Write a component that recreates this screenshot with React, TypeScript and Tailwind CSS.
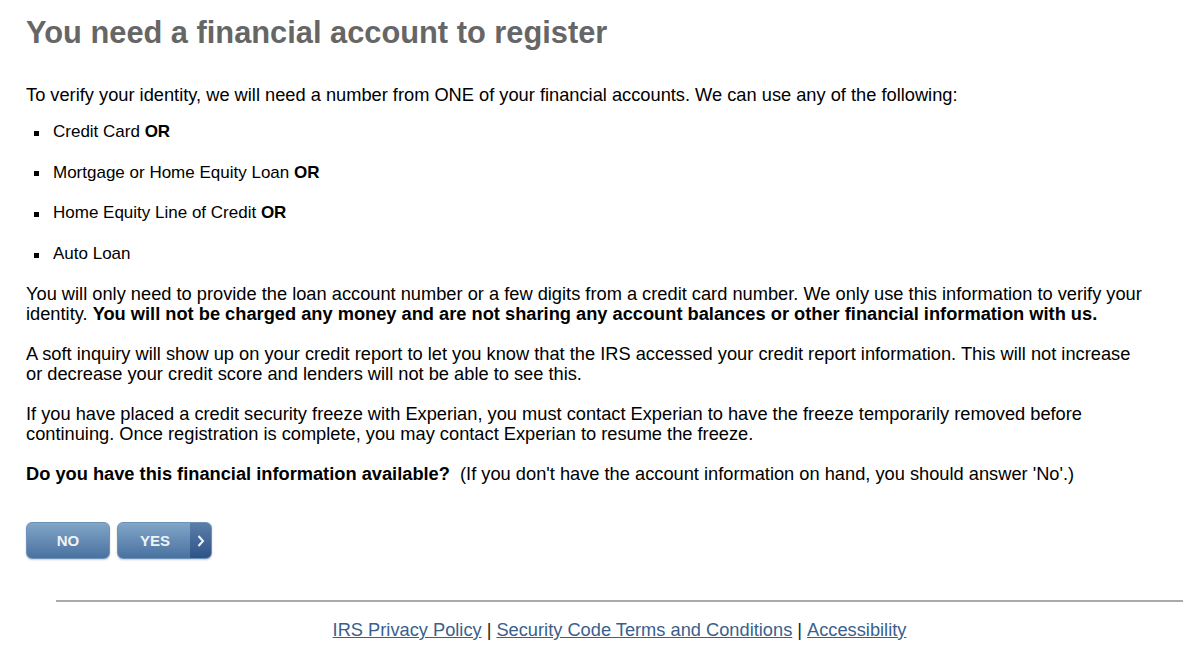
export default function App() {
  const items = [
    { text: "Credit Card", or: true },
    { text: "Mortgage or Home Equity Loan", or: true },
    { text: "Home Equity Line of Credit", or: true },
    { text: "Auto Loan", or: false },
  ];

  return (
    <div className="min-h-[667px] w-[1200px] bg-white font-['Liberation_Sans',Arial,sans-serif] text-[18.25px] leading-[20px] text-black">
      <div className="pl-[26px] pr-[54px]">
        <h1 className="pt-[15px] text-[30.8px] font-bold leading-[36px] text-[#666666]">
          You need a financial account to register
        </h1>

        <p className="mt-[34px]">
          To verify your identity, we will need a number from ONE of your financial accounts. We can use any of the following:
        </p>

        <ul className="text-[17px]">
          {items.map((it) => (
            <li key={it.text} className="mt-[20.7px] flex h-[20px] items-center first:mt-[17px]">
              <span className="mt-[2px] ml-[8px] mr-[14px] h-[5px] w-[5px] bg-black" />
              <span>
                {it.text}
                {it.or && <b> OR</b>}
              </span>
            </li>
          ))}
        </ul>

        <p className="mt-[20px]">
          You will only need to provide the loan account number or a few digits from a credit card number. We only use this information to verify your identity.{" "}
          <b>You will not be charged any money and are not sharing any account balances or other financial information with us.</b>
        </p>

        <p className="mt-[20px]">
          A soft inquiry will show up on your credit report to let you know that the IRS accessed your credit report information. This will not increase or decrease your credit score and lenders will not be able to see this.
        </p>

        <p className="mt-[20px]">
          If you have placed a credit security freeze with Experian, you must contact Experian to have the freeze temporarily removed before continuing. Once registration is complete, you may contact Experian to resume the freeze.
        </p>

        <p className="mt-[20px]">
          <b>Do you have this financial information available?</b>&nbsp; (If you don't have the account information on hand, you should answer 'No'.)
        </p>

        <div className="mt-[38px] flex gap-[7px]">
          <button className="flex h-[37px] w-[84px] items-center justify-center rounded-[6px] border border-[#6f93b8] bg-gradient-to-b from-[#82a6c8] to-[#4a72a0] text-[15px] font-bold text-[#eef3f8] shadow-[0_1px_2px_rgba(0,0,0,0.2)]">
            NO
          </button>
          <button className="flex h-[37px] w-[95px] overflow-hidden rounded-[6px] border border-[#6f93b8] bg-gradient-to-b from-[#82a6c8] to-[#4a72a0] text-[15px] font-bold text-[#eef3f8] shadow-[0_1px_2px_rgba(0,0,0,0.2)]">
            <span className="flex flex-1 items-center justify-center pl-[2px]">YES</span>
            <span className="flex w-[21px] items-center justify-center bg-gradient-to-b from-[#5a7fa9] to-[#2f5387]">
              <svg width="8" height="14" viewBox="0 0 8 14" fill="none">
                <path d="M1.5 2 L6 7 L1.5 12" stroke="#eef3f8" strokeWidth="2" />
              </svg>
            </span>
          </button>
        </div>
      </div>

      <div className="mt-[41px] ml-[56px] mr-[17px]">
        <div className="h-[2px] bg-[#a9a9a9]" />
        <div className="mt-[18px] flex justify-center text-[18.25px] text-[#3a5f8c]">
          <a href="#" className="underline">IRS Privacy Policy</a>
          <span className="px-[5px] text-[#222]">|</span>
          <a href="#" className="underline">Security Code Terms and Conditions</a>
          <span className="px-[5px] text-[#222]">|</span>
          <a href="#" className="underline">Accessibility</a>
        </div>
      </div>
    </div>
  );
}
